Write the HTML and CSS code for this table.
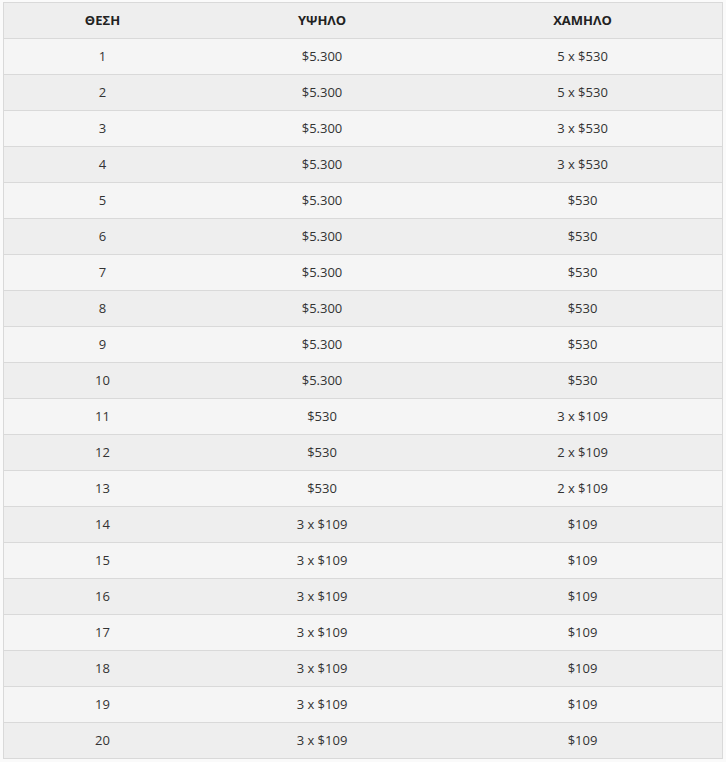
FILE: index.html
```html
<!DOCTYPE html>
<html lang="el">
<head>
<meta charset="utf-8">
<link rel="stylesheet" href="styles.css">
</head>
<body>
<table class="prizes">
<thead>
<tr><th class="c1">ΘΕΣΗ</th><th class="c2">ΥΨΗΛΟ</th><th class="c3">ΧΑΜΗΛΟ</th></tr>
</thead>
<tbody>
<tr><td>1</td><td>$5.300</td><td>5 x $530</td></tr>
<tr><td>2</td><td>$5.300</td><td>5 x $530</td></tr>
<tr><td>3</td><td>$5.300</td><td>3 x $530</td></tr>
<tr><td>4</td><td>$5.300</td><td>3 x $530</td></tr>
<tr><td>5</td><td>$5.300</td><td>$530</td></tr>
<tr><td>6</td><td>$5.300</td><td>$530</td></tr>
<tr><td>7</td><td>$5.300</td><td>$530</td></tr>
<tr><td>8</td><td>$5.300</td><td>$530</td></tr>
<tr><td>9</td><td>$5.300</td><td>$530</td></tr>
<tr><td>10</td><td>$5.300</td><td>$530</td></tr>
<tr><td>11</td><td>$530</td><td>3 x $109</td></tr>
<tr><td>12</td><td>$530</td><td>2 x $109</td></tr>
<tr><td>13</td><td>$530</td><td>2 x $109</td></tr>
<tr><td>14</td><td>3 x $109</td><td>$109</td></tr>
<tr><td>15</td><td>3 x $109</td><td>$109</td></tr>
<tr><td>16</td><td>3 x $109</td><td>$109</td></tr>
<tr><td>17</td><td>3 x $109</td><td>$109</td></tr>
<tr><td>18</td><td>3 x $109</td><td>$109</td></tr>
<tr><td>19</td><td>3 x $109</td><td>$109</td></tr>
<tr><td>20</td><td>3 x $109</td><td>$109</td></tr>
</tbody>
</table>
</body>
</html>
```
FILE: styles.css
```css
html, body {
  margin: 0;
  padding: 0;
  background: #fafafa;
}
body {
  padding: 2px 0 0 3px;
  font-family: "Open Sans", "Liberation Sans", sans-serif;
  color: #333333;
}
.prizes {
  border-collapse: collapse;
  width: 720px;
  table-layout: fixed;
  border: 1px solid #d9d9d9;
}
.prizes th,
.prizes td {
  height: 34px;
  padding: 0 0 1px 0;
  text-align: center;
  vertical-align: middle;
  border-top: 1px solid #d9d9d9;
  font-size: 13px;
}
.prizes th {
  background: #eeeeee;
  font-weight: 700;
  font-size: 13px;
  color: #222222;
}
.prizes .c1 { width: 197px; }
.prizes .c2 { width: 242px; }
.prizes tbody tr:nth-child(odd) td { background: #f5f5f5; }
.prizes tbody tr:nth-child(even) td { background: #eeeeee; }
```
